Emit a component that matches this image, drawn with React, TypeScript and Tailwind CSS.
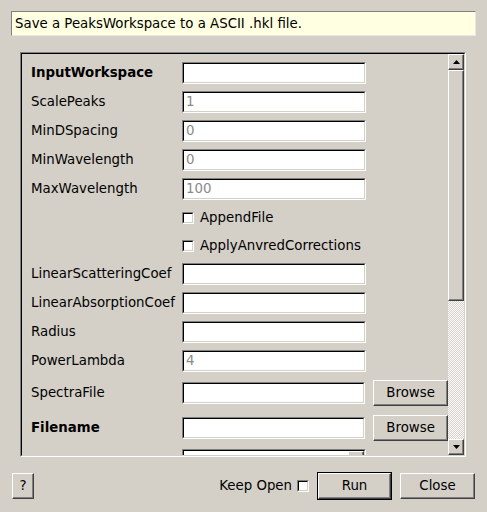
import React from 'react';

// classic sunken / raised bevels
const sunken =
  'border border-t-[#808080] border-l-[#808080] border-r-white border-b-white';
const sunkenInner =
  'border border-t-[#000000] border-l-[#000000] border-r-[#d4d0c8] border-b-[#d4d0c8]';
const raised =
  'border border-t-white border-l-white border-r-[#404040] border-b-[#404040] shadow-[inset_-1px_-1px_0_#808080]';

const TextBox: React.FC<{ value?: string }> = ({ value }) => (
  <div className={`w-[184px] h-[22px] ${sunken}`}>
    <div className={`w-full h-full bg-white ${sunkenInner} flex items-center pl-[2px] text-[#8a8a8a]`}>
      {value}
    </div>
  </div>
);

const CheckBox: React.FC = () => (
  <div className={`w-[12px] h-[12px] ${sunken}`}>
    <div className={`w-full h-full bg-white ${sunkenInner}`} />
  </div>
);

const Button: React.FC<{ label: string; className?: string }> = ({ label, className }) => (
  <div className={`flex items-center justify-center bg-[#d4d0c8] ${raised} ${className ?? ''}`}>
    {label}
  </div>
);

const Arrow: React.FC<{ up?: boolean }> = ({ up }) => (
  <svg width="7" height="4" viewBox="0 0 7 4">
    {up ? <polygon points="0,4 7,4 3.5,0" fill="#000" /> : <polygon points="0,0 7,0 3.5,4" fill="#000" />}
  </svg>
);

interface Field {
  name: string;
  kind: 'text' | 'check' | 'file';
  value?: string;
  bold?: boolean;
}

const FIELDS: Field[] = [
  { name: 'InputWorkspace', kind: 'text', bold: true },
  { name: 'ScalePeaks', kind: 'text', value: '1' },
  { name: 'MinDSpacing', kind: 'text', value: '0' },
  { name: 'MinWavelength', kind: 'text', value: '0' },
  { name: 'MaxWavelength', kind: 'text', value: '100' },
  { name: 'AppendFile', kind: 'check' },
  { name: 'ApplyAnvredCorrections', kind: 'check' },
  { name: 'LinearScatteringCoef', kind: 'text' },
  { name: 'LinearAbsorptionCoef', kind: 'text' },
  { name: 'Radius', kind: 'text' },
  { name: 'PowerLambda', kind: 'text', value: '4' },
  { name: 'SpectraFile', kind: 'file' },
  { name: 'Filename', kind: 'file', bold: true },
];

const Row: React.FC<{ f: Field }> = ({ f }) => {
  if (f.kind === 'check') {
    return (
      <div className="flex items-center h-[21px] shrink-0">
        <div className="w-[151px]" />
        <CheckBox />
        <span className="ml-[6px]">{f.name}</span>
      </div>
    );
  }
  return (
    <div className={`flex items-center shrink-0 ${f.kind === 'file' ? 'h-[28px]' : 'h-[22px]'}`}>
      <div className={`w-[151px] ${f.bold ? 'font-bold' : ''}`}>{f.name}</div>
      <TextBox value={f.value} />
      {f.kind === 'file' && <Button label="Browse" className="ml-[8px] w-[75px] h-[26px]" />}
    </div>
  );
};

export default function App() {
  return (
    <div className="w-[487px] h-[512px] bg-[#d4d0c8] flex flex-col overflow-hidden text-[13.33px] text-black font-['DejaVu_Sans',sans-serif]">
      <div className="mx-[11px] mt-[11px] h-[25px] shrink-0 bg-[#ffffe1] border border-t-[#808080] border-l-[#808080] border-r-[#e8e8e0] border-b-[#e8e8e0] flex items-center px-[3px]">
        Save a PeaksWorkspace to a ASCII .hkl file.
      </div>

      <div className={`ml-[20px] mr-[21px] mt-[16px] h-[405px] shrink-0 ${sunken}`}>
        <div className={`flex h-full ${sunkenInner}`}>
          <div className="flex-1 overflow-hidden pl-[9px] pt-[8px] flex flex-col gap-[7px]">
            {FIELDS.map((f) => (
              <Row key={f.name} f={f} />
            ))}
            <div className="flex items-center h-[22px] shrink-0">
              <div className="w-[151px]" />
              <div className={`w-[184px] h-[22px] ${sunken}`}>
                <div className={`w-full h-full bg-white ${sunkenInner} flex justify-end`}>
                  <div className={`w-[16px] h-full bg-[#d4d0c8] ${raised}`} />
                </div>
              </div>
            </div>
          </div>

          <div className="w-[16px] flex flex-col">
            <div className={`h-[16px] shrink-0 flex items-center justify-center bg-[#d4d0c8] ${raised}`}>
              <Arrow up />
            </div>
            <div className={`h-[231px] shrink-0 bg-[#d4d0c8] ${raised}`} />
            <div className="flex-1 bg-[repeating-conic-gradient(#ffffff_0_25%,#d4d0c8_0_50%)] bg-[length:2px_2px]" />
            <div className={`h-[16px] shrink-0 flex items-center justify-center bg-[#d4d0c8] ${raised}`}>
              <Arrow />
            </div>
          </div>
        </div>
      </div>

      <div className="mt-[15px] h-[28px] flex items-center px-[12px]">
        <Button label="?" className="w-[22px] h-[26px]" />
        <div className="flex-1" />
        <span>Keep Open</span>
        <div className="ml-[5px]">
          <CheckBox />
        </div>
        <div className="ml-[8px] w-[75px] h-[28px] border border-black">
          <Button label="Run" className="w-full h-full" />
        </div>
        <Button label="Close" className="ml-[8px] w-[75px] h-[26px]" />
      </div>
    </div>
  );
}
